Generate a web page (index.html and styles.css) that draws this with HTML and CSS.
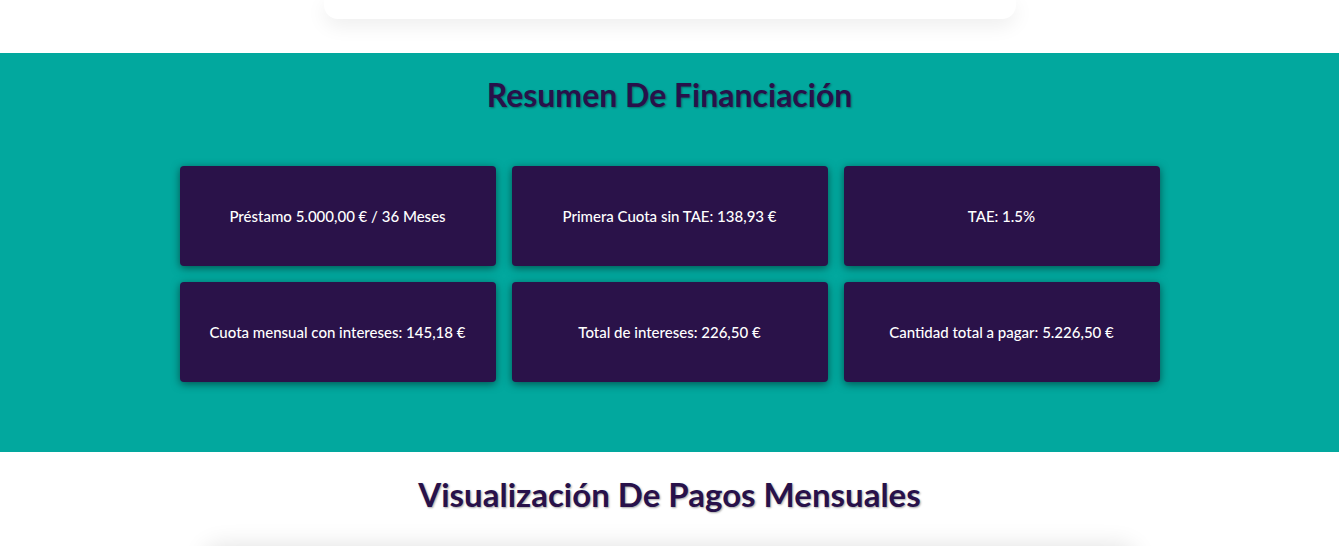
FILE: index.html
```html
<!DOCTYPE html>
<html lang="es">
<head>
<meta charset="utf-8">
<title>Resumen De Financiación</title>
<link rel="stylesheet" href="styles.css">
</head>
<body>
  <section class="top">
    <div class="top-card"></div>
  </section>
  <section class="summary">
    <h2 class="summary-title">Resumen De Financiación</h2>
    <div class="grid">
      <div class="box">Préstamo 5.000,00 € / 36 Meses</div>
      <div class="box">Primera Cuota sin TAE: 138,93 €</div>
      <div class="box">TAE: 1.5%</div>
      <div class="box">Cuota mensual con intereses: 145,18 €</div>
      <div class="box">Total de intereses: 226,50 €</div>
      <div class="box">Cantidad total a pagar: 5.226,50 €</div>
    </div>
  </section>
  <section class="visual">
    <h2 class="visual-title">Visualización De Pagos Mensuales</h2>
    <div class="chart-card"></div>
  </section>
</body>
</html>
```

FILE: styles.css
```css
html, body {
  margin: 0;
  padding: 0;
  background: #ffffff;
  font-family: "Lato", "Noto Sans", sans-serif;
  overflow: hidden;
}

.top {
  height: 53px;
  display: flex;
  justify-content: center;
}

.top-card {
  width: 692px;
  height: 19px;
  background: #ffffff;
  border-radius: 0 0 14px 14px;
  box-shadow: 0 6px 20px rgba(0, 0, 0, 0.08);
}

.summary {
  background: #02a89e;
  padding: 20px 0 70px;
}

.summary-title,
.visual-title {
  margin: 0;
  text-align: center;
  font-size: 32px;
  line-height: 44px;
  font-weight: 700;
  color: #28114a;
  text-shadow: 1px 1px 2px rgba(0, 0, 0, 0.35);
}

.visual-title {
  font-size: 33px;
}

.grid {
  width: 980px;
  margin: 49px auto 0;
  display: grid;
  grid-template-columns: repeat(3, 1fr);
  gap: 16px;
}

.box {
  height: 100px;
  display: flex;
  align-items: center;
  justify-content: center;
  background: #2a1249;
  border-radius: 4px;
  color: #ffffff;
  font-size: 15px;
  font-weight: 500;
  box-shadow: 0 2px 8px rgba(0, 0, 0, 0.5);
}

.visual {
  padding: 20px 0 0;
}

.chart-card {
  width: 930px;
  height: 200px;
  margin: 30px auto 0;
  background: #ffffff;
  border-radius: 14px;
  box-shadow: 0 0 24px rgba(0, 0, 0, 0.12);
}
```
